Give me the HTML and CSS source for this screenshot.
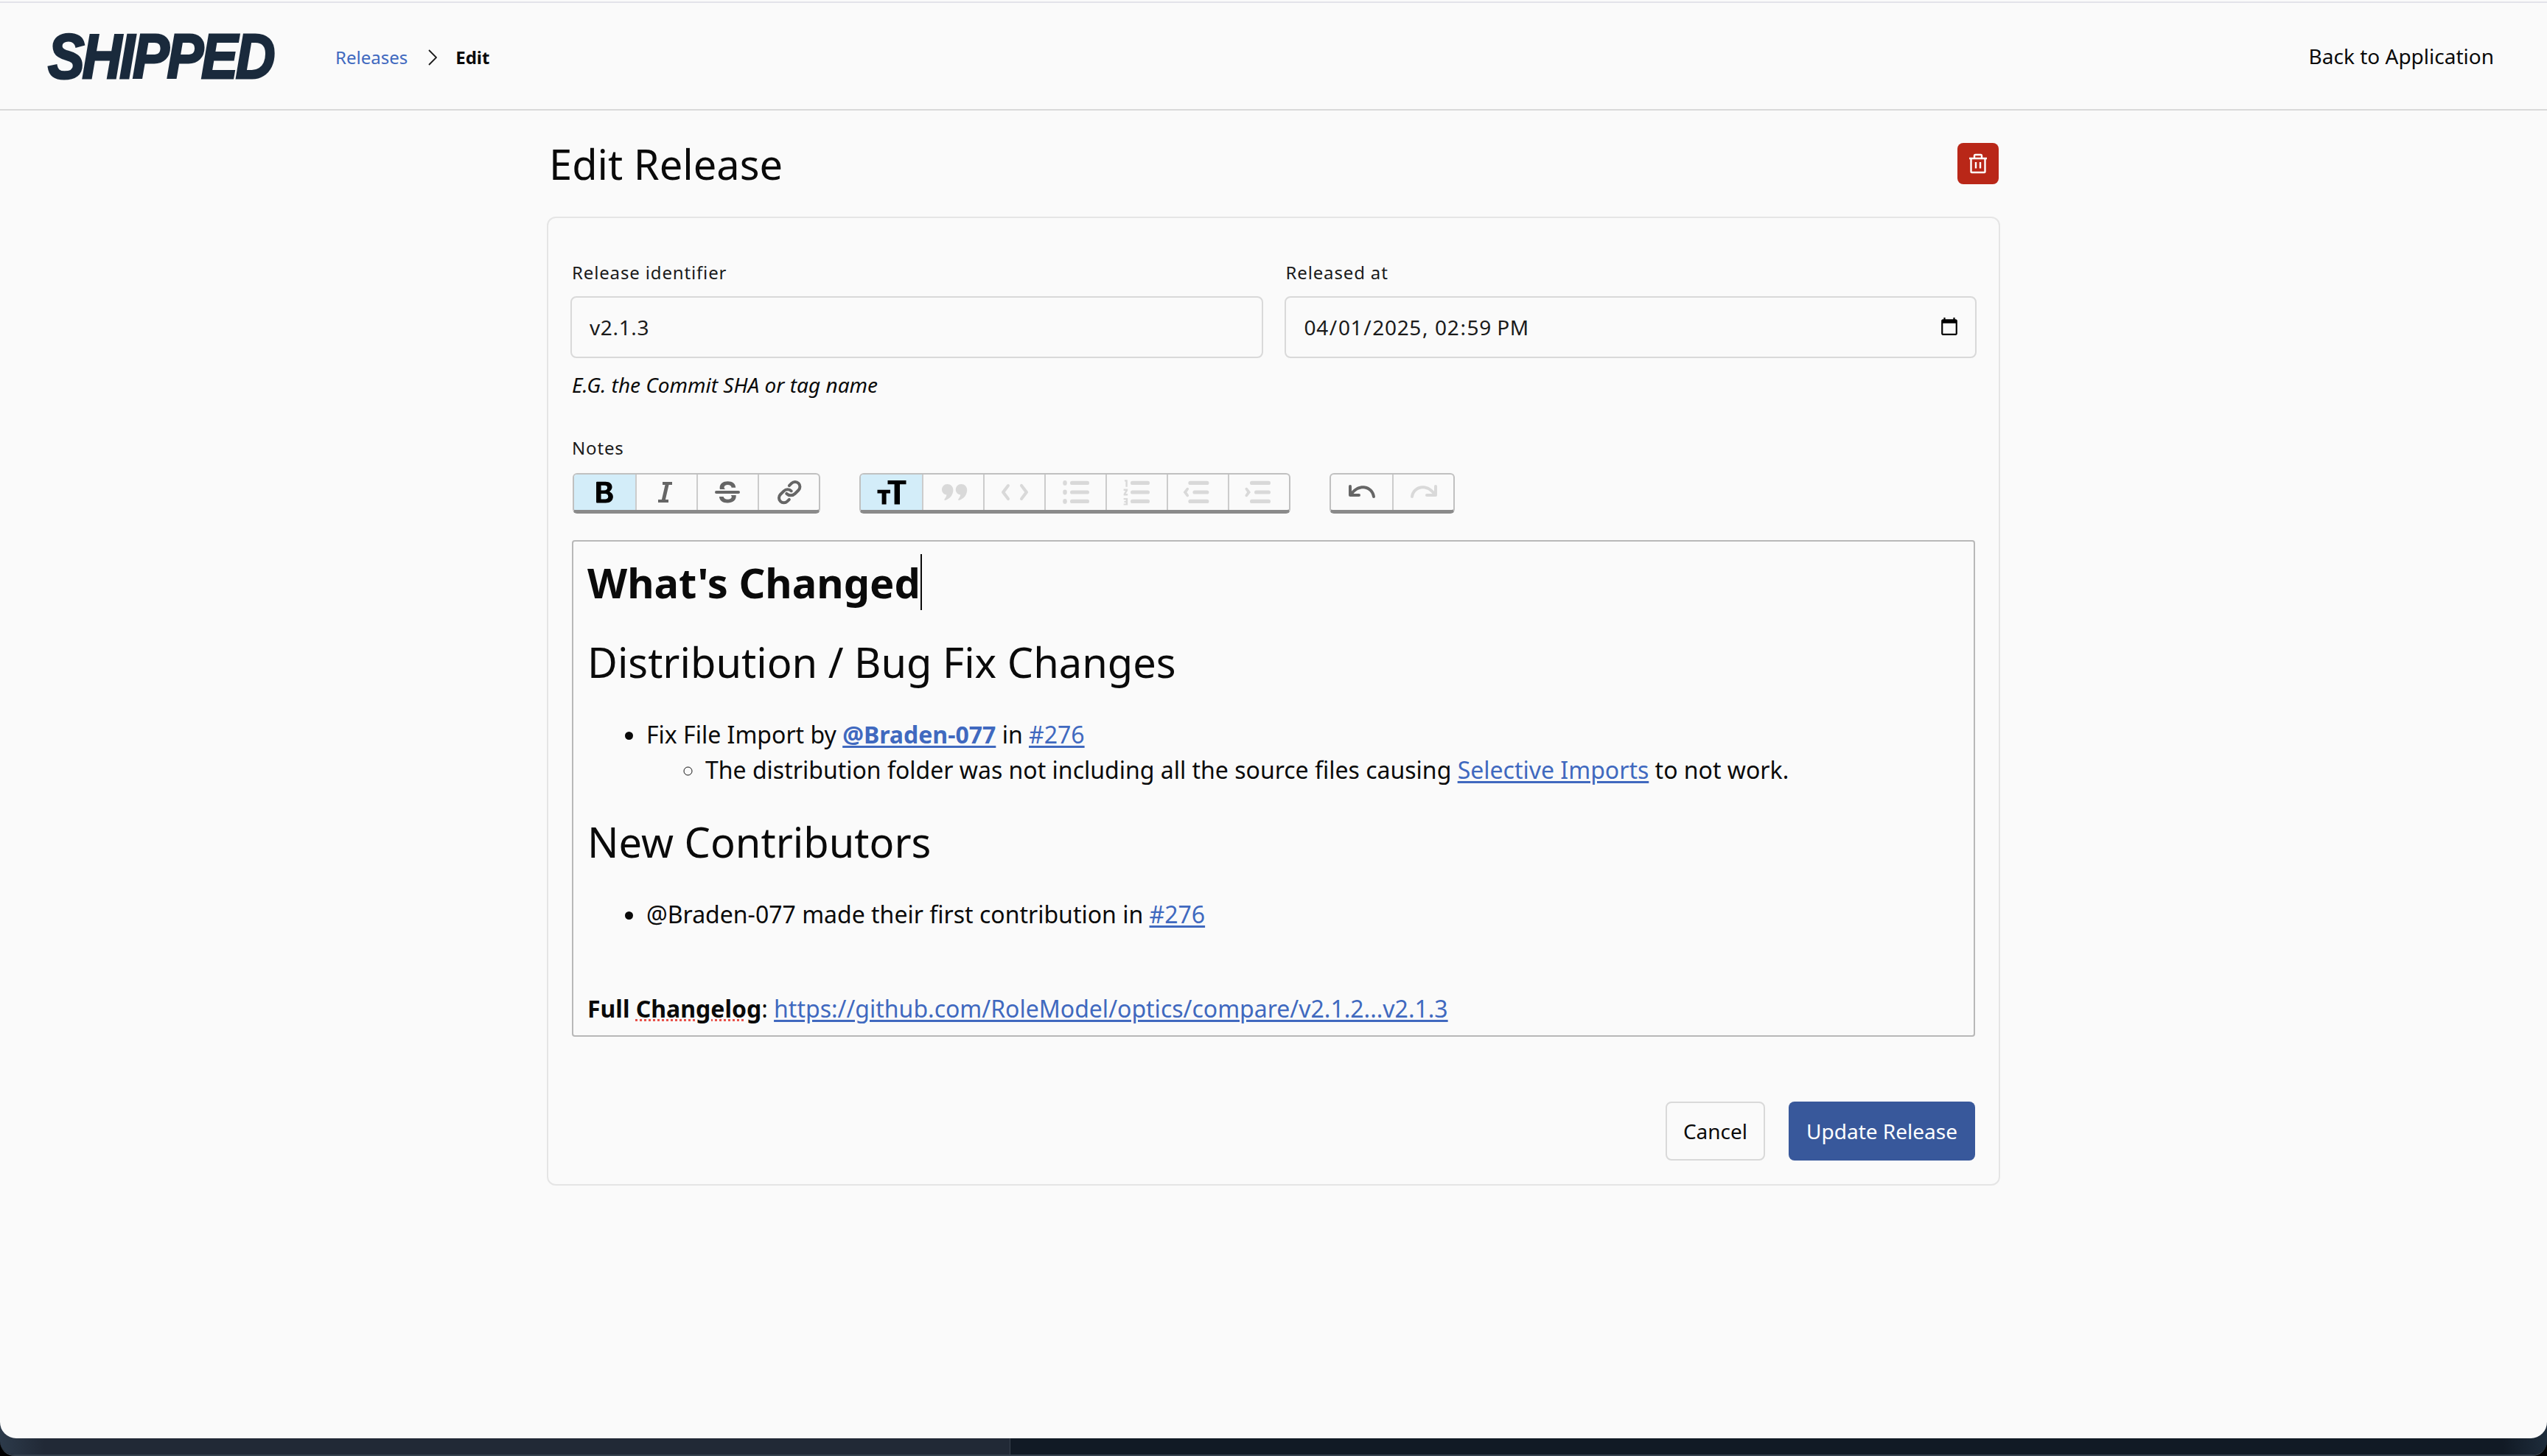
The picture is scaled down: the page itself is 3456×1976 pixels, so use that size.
FILE: index.html
```html
<!DOCTYPE html>
<html lang="en">
<head>
<meta charset="utf-8">
<title>Edit Release</title>
<link rel="stylesheet" href="styles.css">
</head>
<body>
<div class="page">
  <header class="topbar">
    <div class="logo">SHIPPED</div>
    <nav class="crumbs">
      <a class="crumb-link" href="#">Releases</a>
      <svg class="crumb-sep" viewBox="0 0 12 22"><path d="M1 1l10 10L1 21"/></svg>
      <span class="crumb-current">Edit</span>
    </nav>
    <a class="back" href="#">Back to Application</a>
  </header>
  <main class="main">
    <div class="title-row">
      <h1 class="title">Edit Release</h1>
      <button class="delete" aria-label="Delete">
        <svg viewBox="0 0 24 26"><path d="M0 6h24M2.500 6v18a1 1 0 0 0 1 1h17a1 1 0 0 0 1-1V6M7 6V2.500a1.500 1.500 0 0 1 1.500-1.500h7a1.500 1.500 0 0 1 1.500 1.500V6M9 11v8.500M15 11v8.500"/></svg>
      </button>
    </div>
    <form class="card">
      <div class="fields">
        <div class="field">
          <label class="label">Release identifier</label>
          <input class="input" type="text" value="v2.1.3">
          <p class="help">E.G. the Commit SHA or tag name</p>
        </div>
        <div class="field">
          <label class="label">Released at</label>
          <input class="input" type="datetime-local" value="2025-04-01T14:59">
        </div>
      </div>
      <label class="label notes-label">Notes</label>
      <div class="toolbar">
        <div class="tool-group">
          <span class="tool active"><svg class="ic dark" viewBox="0 0 24 24"><path d="M6.522 19.242a.5.5 0 0 1-.5-.5V5.350a.5.5 0 0 1 .5-.5h5.783c1.347 0 2.460.345 3.240.982.783.640 1.216 1.562 1.216 2.683 0 1.130-.587 2.129-1.476 2.710a.350.350 0 0 0 .049.613c1.259.560 2.101 1.742 2.101 3.220 0 1.282-.483 2.334-1.363 3.063-.876.726-2.132 1.120-3.660 1.120h-5.890ZM9.270 7.347v3.362h1.970c.766 0 1.347-.170 1.733-.464.380-.291.587-.716.587-1.270 0-.530-.183-.928-.513-1.198-.334-.273-.838-.430-1.505-.430H9.270Zm0 5.606v3.791h2.389c.832 0 1.448-.177 1.853-.497.399-.315.614-.786.614-1.423 0-.620-.220-1.077-.630-1.385-.418-.313-1.053-.486-1.905-.486H9.270Z"/></svg></span>
          <span class="tool"><svg class="ic" viewBox="0 0 24 24"><path d="M9 5h6.500v2h-2.230l-2.310 10H13v2H6v-2h2.461l2.306-10H9V5Z"/></svg></span>
          <span class="tool"><svg class="ic" viewBox="0 0 24 24"><path d="M6 14.986c.088 2.647 2.246 4.258 5.635 4.258 3.496 0 5.713-1.728 5.713-4.463 0-.275-.02-.536-.062-.781h-3.461c.398.293.573.654.573 1.123 0 1.035-1.074 1.787-2.646 1.787-1.563 0-2.773-.762-2.910-1.924H6ZM6.432 10h3.763c-.632-.314-.914-.715-.914-1.273 0-1.045.977-1.739 2.432-1.739 1.475 0 2.520.723 2.617 1.914h2.764c-.05-2.548-2.110-4.238-5.390-4.238-3.145 0-5.392 1.719-5.392 4.316 0 .363.04.703.120 1.020ZM4 11a1 1 0 1 0 0 2h15a1 1 0 1 0 0-2H4Z"/></svg></span>
          <span class="tool"><svg class="ic" viewBox="0 0 24 24"><path d="M18.948 5.258a4.337 4.337 0 0 0-6.108 0L11.217 6.870a.993.993 0 0 0 0 1.410c.392.390 1.027.390 1.418 0l1.623-1.613a2.323 2.323 0 0 1 3.271 0 2.290 2.290 0 0 1 0 3.251l-2.393 2.380a3.021 3.021 0 0 1-4.255 0l-.05-.049a1.007 1.007 0 0 0-1.418 0 .993.993 0 0 0 0 1.410l.05.049a5.036 5.036 0 0 0 7.091 0l2.394-2.380a4.275 4.275 0 0 0 0-6.072Zm-13.683 13.600a4.337 4.337 0 0 0 6.108 0l1.262-1.255a.993.993 0 0 0 0-1.410 1.007 1.007 0 0 0-1.418 0L9.954 17.450a2.323 2.323 0 0 1-3.270 0 2.290 2.290 0 0 1 0-3.251l2.344-2.331a2.579 2.579 0 0 1 3.631 0c.392.390 1.027.390 1.419 0a.993.993 0 0 0 0-1.410 4.593 4.593 0 0 0-6.468 0l-2.345 2.330a4.275 4.275 0 0 0 0 6.072Z"/></svg></span>
        </div>
        <div class="tool-group">
          <span class="tool active"><svg class="ic dark" viewBox="0 0 24 24"><path d="M9.250 4h12.500v2.600H17.500v13.600h-3.700V6.600H9.250ZM2.250 10.400H11v2.400H8.300v7.400H5.300v-7.400H2.250Z"/></svg></span>
          <span class="tool"><svg class="ic off" viewBox="0 0 24 24"><path d="M7.700 6.500c2.300 0 4 1.700 4 4 0 3.200-2.200 6-5.400 7-.5.100-.8-.4-.5-.8.800-1 1.300-1.900 1.400-2.900C5.500 13.600 4 12.300 4 10.300c0-2.100 1.600-3.800 3.700-3.800Zm9.400 0c2.300 0 4 1.700 4 4 0 3.200-2.200 6-5.400 7-.5.100-.8-.4-.5-.8.800-1 1.300-1.900 1.400-2.900-1.700-.2-3.200-1.500-3.200-3.500 0-2.100 1.600-3.800 3.700-3.800Z"/></svg></span>
          <span class="tool"><svg class="ic off" viewBox="0 0 24 24"><path d="M3.293 11.293a1 1 0 0 0 0 1.414l3.500 4.500a1 1 0 1 0 1.414-1.414L5.414 12l2.793-3.793a1 1 0 0 0-1.414-1.414l-3.500 4.500Zm13.914 5.914 3.500-4.500a1 1 0 0 0 0-1.414l-3.500-4.500a1 1 0 1 0-1.414 1.414L18.586 12l-2.793 3.793a1 1 0 0 0 1.414 1.414Z"/></svg></span>
          <span class="tool"><svg class="ic off" viewBox="0 0 24 24"><rect x="8" y="4.400" width="13" height="2.600" rx="1.300"/><rect x="8" y="10.700" width="13" height="2.600" rx="1.300"/><rect x="8" y="16.900" width="13" height="2.600" rx="1.300"/><ellipse cx="4.500" cy="5.700" rx="1.400" ry="1.700"/><ellipse cx="4.500" cy="12" rx="1.400" ry="1.700"/><ellipse cx="4.500" cy="18.200" rx="1.400" ry="1.700"/></svg></span>
          <span class="tool"><svg class="ic off" viewBox="0 0 24 24"><rect x="7.500" y="4.400" width="13" height="2.600" rx="1.300"/><rect x="7.500" y="10.700" width="13" height="2.600" rx="1.300"/><rect x="7.500" y="16.900" width="13" height="2.600" rx="1.300"/><path d="M3.500 3.600h1.900v4.800H4.200V4.700h-.7ZM2.800 9.800h2.800v1.100L4.300 13h1.300v1.200H2.800v-1.100L4.100 11H2.800ZM2.800 16h2.800v4.800H2.800v-1.100h1.500V19H3.200v-1h1.100v-.9H2.800Z"/></svg></span>
          <span class="tool"><svg class="ic off" viewBox="0 0 24 24"><rect x="5.200" y="4.400" width="14" height="2.600" rx="1.300"/><rect x="8.200" y="10.700" width="11" height="2.600" rx="1.300"/><rect x="5.200" y="16.900" width="14" height="2.600" rx="1.300"/><path d="M5.400 10.300a.9.900 0 0 0-1.500-1L1.800 12l2.100 2.700a.9.900 0 0 0 1.500-1L4.200 12Z"/></svg></span>
          <span class="tool"><svg class="ic off" viewBox="0 0 24 24"><rect x="5.500" y="4.400" width="14" height="2.600" rx="1.300"/><rect x="8.500" y="10.700" width="11" height="2.600" rx="1.300"/><rect x="5.500" y="16.900" width="14" height="2.600" rx="1.300"/><path d="M2.400 10.300a.9.900 0 0 1 1.500-1L6 12l-2.100 2.700a.9.900 0 0 1-1.500-1L3.600 12Z"/></svg></span>
        </div>
        <div class="tool-group">
          <span class="tool"><svg class="ic" viewBox="0 0 24 24"><path d="M3 14a1 1 0 0 0 1 1h6a1 1 0 1 0 0-2H6.257c2.247-2.764 5.151-3.668 7.579-3.264 2.589.432 4.739 2.356 5.174 5.405a1 1 0 0 0 1.980-.283c-.564-3.950-3.415-6.526-6.825-7.095C11.084 7.250 7.630 8.377 5 11.390V8a1 1 0 0 0-2 0v6Z"/></svg></span>
          <span class="tool"><svg class="ic off" viewBox="0 0 24 24"><path d="M21 14a1 1 0 0 1-1 1h-6a1 1 0 1 1 0-2h3.743c-2.247-2.764-5.151-3.668-7.579-3.264-2.589.432-4.739 2.356-5.174 5.405a1 1 0 0 1-1.980-.283c.564-3.950 3.415-6.526 6.825-7.095C12.916 7.250 16.370 8.377 19 11.390V8a1 1 0 1 1 2 0v6Z"/></svg></span>
        </div>
      </div>
      <div class="editor">
        <h2 class="ed-h1"><span class="caret">What's Changed</span></h2>
        <h3 class="ed-h2">Distribution / Bug Fix Changes</h3>
        <ul class="ed-list">
          <li>Fix File Import by <a class="ed-link strong" href="#">@Braden-077</a> in <a class="ed-link" href="#">#276</a>
            <ul class="ed-sub">
              <li>The distribution folder was not including all the source files causing <a class="ed-link" href="#">Selective Imports</a> to not work.</li>
            </ul>
          </li>
        </ul>
        <h3 class="ed-h2 second">New Contributors</h3>
        <ul class="ed-list">
          <li>@Braden-077 made their first contribution in <a class="ed-link" href="#">#276</a></li>
        </ul>
        <p class="ed-foot"><strong>Full <span class="spell">Changelog</span></strong>: <a class="ed-link" href="#">https://github.com/RoleModel/optics/compare/v2.1.2...v2.1.3</a></p>
      </div>
      <div class="actions">
        <a class="btn btn-cancel" href="#">Cancel</a>
        <button class="btn btn-primary" type="button">Update Release</button>
      </div>
    </form>
  </main>
</div>
<div class="dock"><div class="dock-left"></div><div class="dock-right"></div></div>
</body>
</html>
```

FILE: styles.css
```css
* { box-sizing: border-box; }
html, body { margin: 0; height: 1976px; overflow: hidden; }
body {
  font-family: "Noto Sans", sans-serif;
  color: #0a0a0a;
  background: #000;
  display: flex;
  flex-direction: column;
}
a { text-decoration: none; }

.page {
  height: 1952px;
  flex: none;
  background: #fafafa;
  padding-top: 2px;
  border-radius: 0 0 22px 22px;
  position: relative;
  z-index: 1;
}
.dock {
  height: 48px;
  flex: none;
  margin-top: -24px;
  display: flex;
  border-radius: 0 0 20px 20px;
  overflow: hidden;
  border-bottom: 2px solid #35414e;
}
.dock-left { width: 1371px; background: linear-gradient(90deg, #2c3a4a, #212936 60px); border-right: 1px solid #3a424d; }
.dock-right { flex: 1; background: linear-gradient(270deg, #1e2c3b, #111a25 60px); }

.topbar {
  height: 148px;
  border-top: 2px solid #e3e3ea;
  border-bottom: 2px solid #d9d9d9;
  display: flex;
  align-items: center;
  padding: 0 72px 0 65px;
}
.logo {
  width: 309px;
  font-family: "Liberation Sans", Arial, sans-serif;
  font-weight: 700;
  font-style: italic;
  font-size: 86px;
  line-height: 62px;
  color: #1a2a3c;
  -webkit-text-stroke: 3px #1a2a3c;
  letter-spacing: -3.500px;
  white-space: nowrap;
  transform: scaleX(.865);
  transform-origin: left center;
}
.crumbs { display: flex; align-items: center; margin: 3px 0 0 81px; font-size: 24px; }
.crumb-link { color: #4069bf; }
.crumb-sep { width: 12px; height: 22px; margin: 0 25px 0 28px; fill: none; stroke: #1a1a1a; stroke-width: 1.800; }
.crumb-current { font-weight: 700; }
.back { margin-left: auto; font-size: 28px; color: #0a0a0a; }

.main { width: 1972px; margin: 0 auto; }
.title-row { display: flex; justify-content: space-between; align-items: center; padding: 44px 2px 44px 3px; }
.title { margin: 0; font-size: 56px; font-weight: 400; line-height: 56px; }
.delete {
  width: 56px; height: 56px; border: 0; padding: 0;
  background: #b92718; border-radius: 8px;
  display: flex; align-items: center; justify-content: center;
}
.delete svg { width: 24px; height: 26px; fill: none; stroke: #fff; stroke-width: 2.400; overflow: visible; }

.card {
  border: 2px solid #e5e5e5;
  border-radius: 12px;
  padding: 56px 30px 32px;
  display: flex;
  flex-direction: column;
  background: #fafafa;
}
.fields { display: grid; grid-template-columns: 1fr 1fr; gap: 29px; }
.field { display: flex; flex-direction: column; }
.label { display: block; font-size: 24px; line-height: 36px; color: #1a1a1a; letter-spacing: .85px; padding-left: 2px; }
.input {
  height: 84px;
  margin-top: 14px;
  border: 2px solid #d9d9d9;
  border-radius: 8px;
  background: #fafafa;
  padding: 0 19px 0 24px;
  font: 400 28px "Noto Sans", sans-serif;
  letter-spacing: .65px;
  color: #1a1a1a;
  outline: 0;
  width: 100%;
}
.help { margin: 18px 0 0; padding-left: 2px; font-size: 28px; line-height: 36px; font-style: italic; }
.notes-label { margin-top: 50px; }

.toolbar { display: flex; gap: 53px; margin: 16px 0 36px; padding-left: 3px; }
.tool-group {
  display: flex;
  height: 55px;
  border: 2px solid #c0c0c0;
  border-bottom: 5px solid #8a8a8a;
  border-radius: 6px;
  overflow: hidden;
}
.tool { width: 83px; display: flex; align-items: center; justify-content: center; border-left: 2px solid #ccc; }
.tool:first-child { border-left: 0; }
.tool.active { background: #d3edf9; }
.ic { width: 48px; height: 48px; fill: #666; }
.ic.dark { fill: #000; }
.ic.off { fill: #d9d9d9; }

.editor {
  margin: 0 2px 0 2px;
  border: 2px solid #b8b8b8;
  border-radius: 4px;
  padding: 17px 20px 12px 19px;
  font-size: 32px;
  line-height: 48px;
}
.ed-h1 { margin: 0; font-size: 56px; font-weight: 700; line-height: 76px; }
.caret { border-right: 2px solid #0a0a0a; }
.ed-h2 { margin: 32px 0 0; font-size: 56px; font-weight: 400; line-height: 76px; }
.ed-h2.second { margin-top: 35px; }
.ed-list { margin: 37px 0 0; padding-left: 80px; }
.ed-sub { margin: 0; padding-left: 80px; list-style: circle; }
.ed-link { color: #4069bf; text-decoration: underline; text-underline-offset: 3px; }
.ed-link.strong { font-weight: 700; }
.ed-foot { margin: 80px 0 0; }
.spell { text-decoration: underline dotted #e8524a; }

.actions { display: flex; justify-content: flex-end; gap: 32px; margin-top: 88px; padding-right: 2px; }
.btn {
  height: 80px;
  display: flex;
  align-items: center;
  justify-content: center;
  border-radius: 8px;
  font: 400 28px "Noto Sans", sans-serif;
}
.btn-cancel { width: 135px; border: 2px solid #d9d9d9; color: #0a0a0a; }
.btn-primary { width: 253px; border: 0; background: #38589b; color: #fff; }
```
